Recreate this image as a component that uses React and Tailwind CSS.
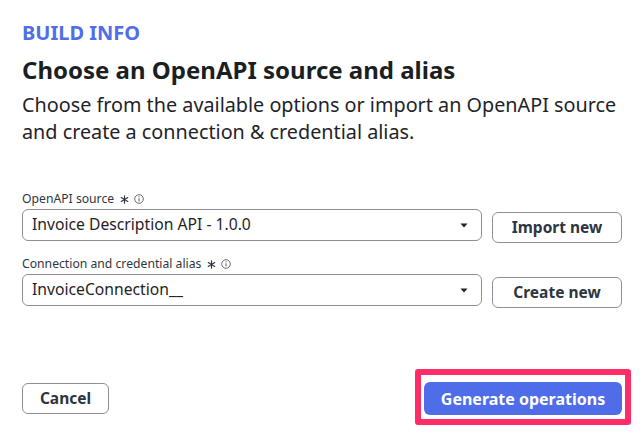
import React from "react";

function Asterisk() {
  return (
    <svg width="9" height="9" viewBox="0 0 10 10" className="inline-block" aria-hidden="true">
      <g stroke="#2f3640" strokeWidth="1.3" strokeLinecap="round">
        <line x1="5" y1="0.8" x2="5" y2="9.2" />
        <line x1="1.4" y1="2.9" x2="8.6" y2="7.1" />
        <line x1="1.4" y1="7.1" x2="8.6" y2="2.9" />
      </g>
    </svg>
  );
}

function Info() {
  return (
    <svg width="10" height="10" viewBox="0 0 10 10" className="inline-block" aria-hidden="true">
      <circle cx="5" cy="5" r="4.3" fill="none" stroke="#555c63" strokeWidth="0.9" />
      <line x1="5" y1="4.3" x2="5" y2="7.4" stroke="#555c63" strokeWidth="1" />
      <circle cx="5" cy="2.8" r="0.6" fill="#555c63" />
    </svg>
  );
}

function Caret() {
  return (
    <svg width="8" height="5" viewBox="0 0 8 5" aria-hidden="true">
      <path d="M0.5 0.5 L7.5 0.5 L4 4.5 Z" fill="#1f2328" />
    </svg>
  );
}

function Field({ label, value, button }) {
  return (
    <div className="flex flex-col">
      <div className="flex h-[16px] items-center gap-[5px] text-[12.2px] leading-[16px] text-[#30363d]">
        <span className="mr-[1px]">{label}</span>
        <Asterisk />
        <Info />
      </div>
      <div className="mt-[2px] flex items-start gap-[10px]">
        <div className="flex h-[32px] flex-1 items-center justify-between rounded-[6px] border border-[#8c9198] pl-[9px] pr-[13px] text-[15.7px] text-[#1f2328]">
          <span>{value}</span>
          <Caret />
        </div>
        <button className="mt-[3px] flex h-[31px] w-[130px] items-center justify-center rounded-[6px] border border-[#8c9198] bg-white text-[15.5px] font-bold text-[#2d3640]">
          {button}
        </button>
      </div>
    </div>
  );
}

export default function App() {
  return (
    <div
      className="flex h-[435px] w-[644px] flex-col bg-white px-[22px]"
      style={{ fontFamily: '"Noto Sans", "Open Sans", sans-serif' }}
    >
      <div className="pt-[21px] text-[20px] font-bold leading-[24px] text-[#4f6ee8]">BUILD INFO</div>
      <h1 className="mt-[10px] text-[24px] font-bold leading-[30px] text-[#1b1f23]">
        Choose an OpenAPI source and alias
      </h1>
      <p className="mt-[6px] whitespace-nowrap text-[19.8px] leading-[27px] text-[#1f2328]">
        Choose from the available options or import an OpenAPI source
        <br />
        and create a connection &amp; credential alias.
      </p>

      <div className="mt-[46px] flex flex-col gap-[13px]">
        <Field label="OpenAPI source" value="Invoice Description API - 1.0.0" button="Import new" />
        <Field label="Connection and credential alias" value="InvoiceConnection__" button="Create new" />
      </div>

      <div className="mt-[74px] flex items-center justify-between">
        <button className="flex h-[31px] w-[87px] items-center justify-center rounded-[6px] border border-[#8c9198] bg-white text-[15.5px] font-bold text-[#2d3640]">
          Cancel
        </button>
        <div className="relative">
          <button className="flex h-[33px] w-[198px] items-center justify-center rounded-[6px] bg-[#4f6de8] text-[16px] font-bold text-white">
            Generate operations
          </button>
          <div className="pointer-events-none absolute -bottom-[10px] -left-[9px] -right-[9px] -top-[13px] rounded-[3px] border-[6px] border-[#fe2d68]" />
        </div>
      </div>
    </div>
  );
}
